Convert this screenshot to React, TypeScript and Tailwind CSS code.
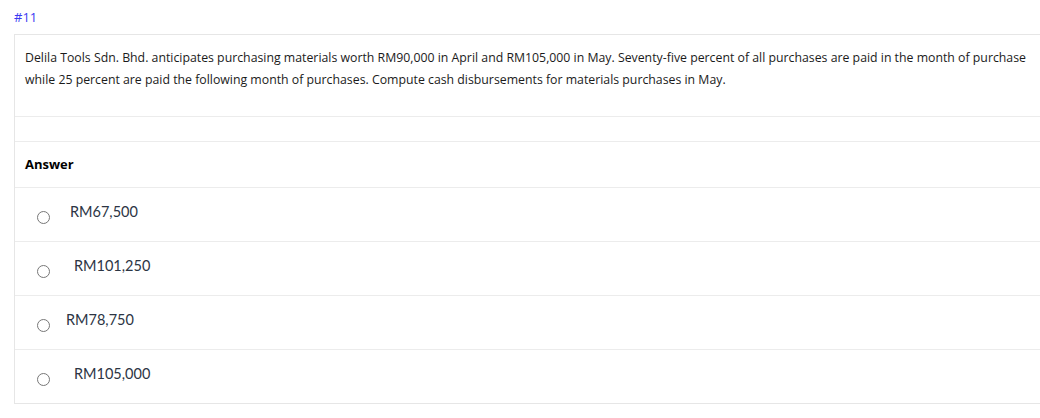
import React from "react";

const options = [
  { label: "RM67,500", pad: "pl-[20px]" },
  { label: "RM101,250", pad: "pl-[24px]" },
  { label: "RM78,750", pad: "pl-[16px]" },
  { label: "RM105,000", pad: "pl-[24px]" },
];

export default function App() {
  return (
    <div className="w-[1040px] h-[418px] overflow-hidden bg-white font-['Open_Sans',sans-serif]">
      <div className="pl-[14px] pt-[8px] text-[13px] leading-[18px] text-[#3a3af2]">#11</div>
      <div className="ml-[14px] mt-[8px] w-[1100px] border border-[#e6e6e6]">
        <div className="h-[81px] px-[10px] pt-[12px] text-[12.3px] leading-[22px] text-[#1b1b1b]">
          <p>
            Delila Tools Sdn. Bhd. anticipates purchasing materials worth RM90,000 in April and RM105,000 in May.
            Seventy-five percent of all purchases are paid in the month of purchase
            <br />
            while 25 percent are paid the following month of purchases. Compute cash disbursements for materials
            purchases in May.
          </p>
        </div>
        <div className="h-[25px] border-t border-[#ececec]" />
        <div className="h-[46px] border-t border-[#ececec] flex items-center px-[10px]">
          <span className="text-[13px] font-bold text-black">Answer</span>
        </div>
        {options.map((o) => (
          <div key={o.label} className="h-[54px] border-t border-[#ececec] flex items-center pl-[22px]">
            <span className="mt-[6px] w-[13px] h-[13px] rounded-full border border-[#777777] bg-white shrink-0" />
            <span className={`${o.pad} mb-[6px] text-[14.5px] text-[#2c3544] font-['Lato',sans-serif]`}>
              {o.label}
            </span>
          </div>
        ))}
      </div>
    </div>
  );
}
